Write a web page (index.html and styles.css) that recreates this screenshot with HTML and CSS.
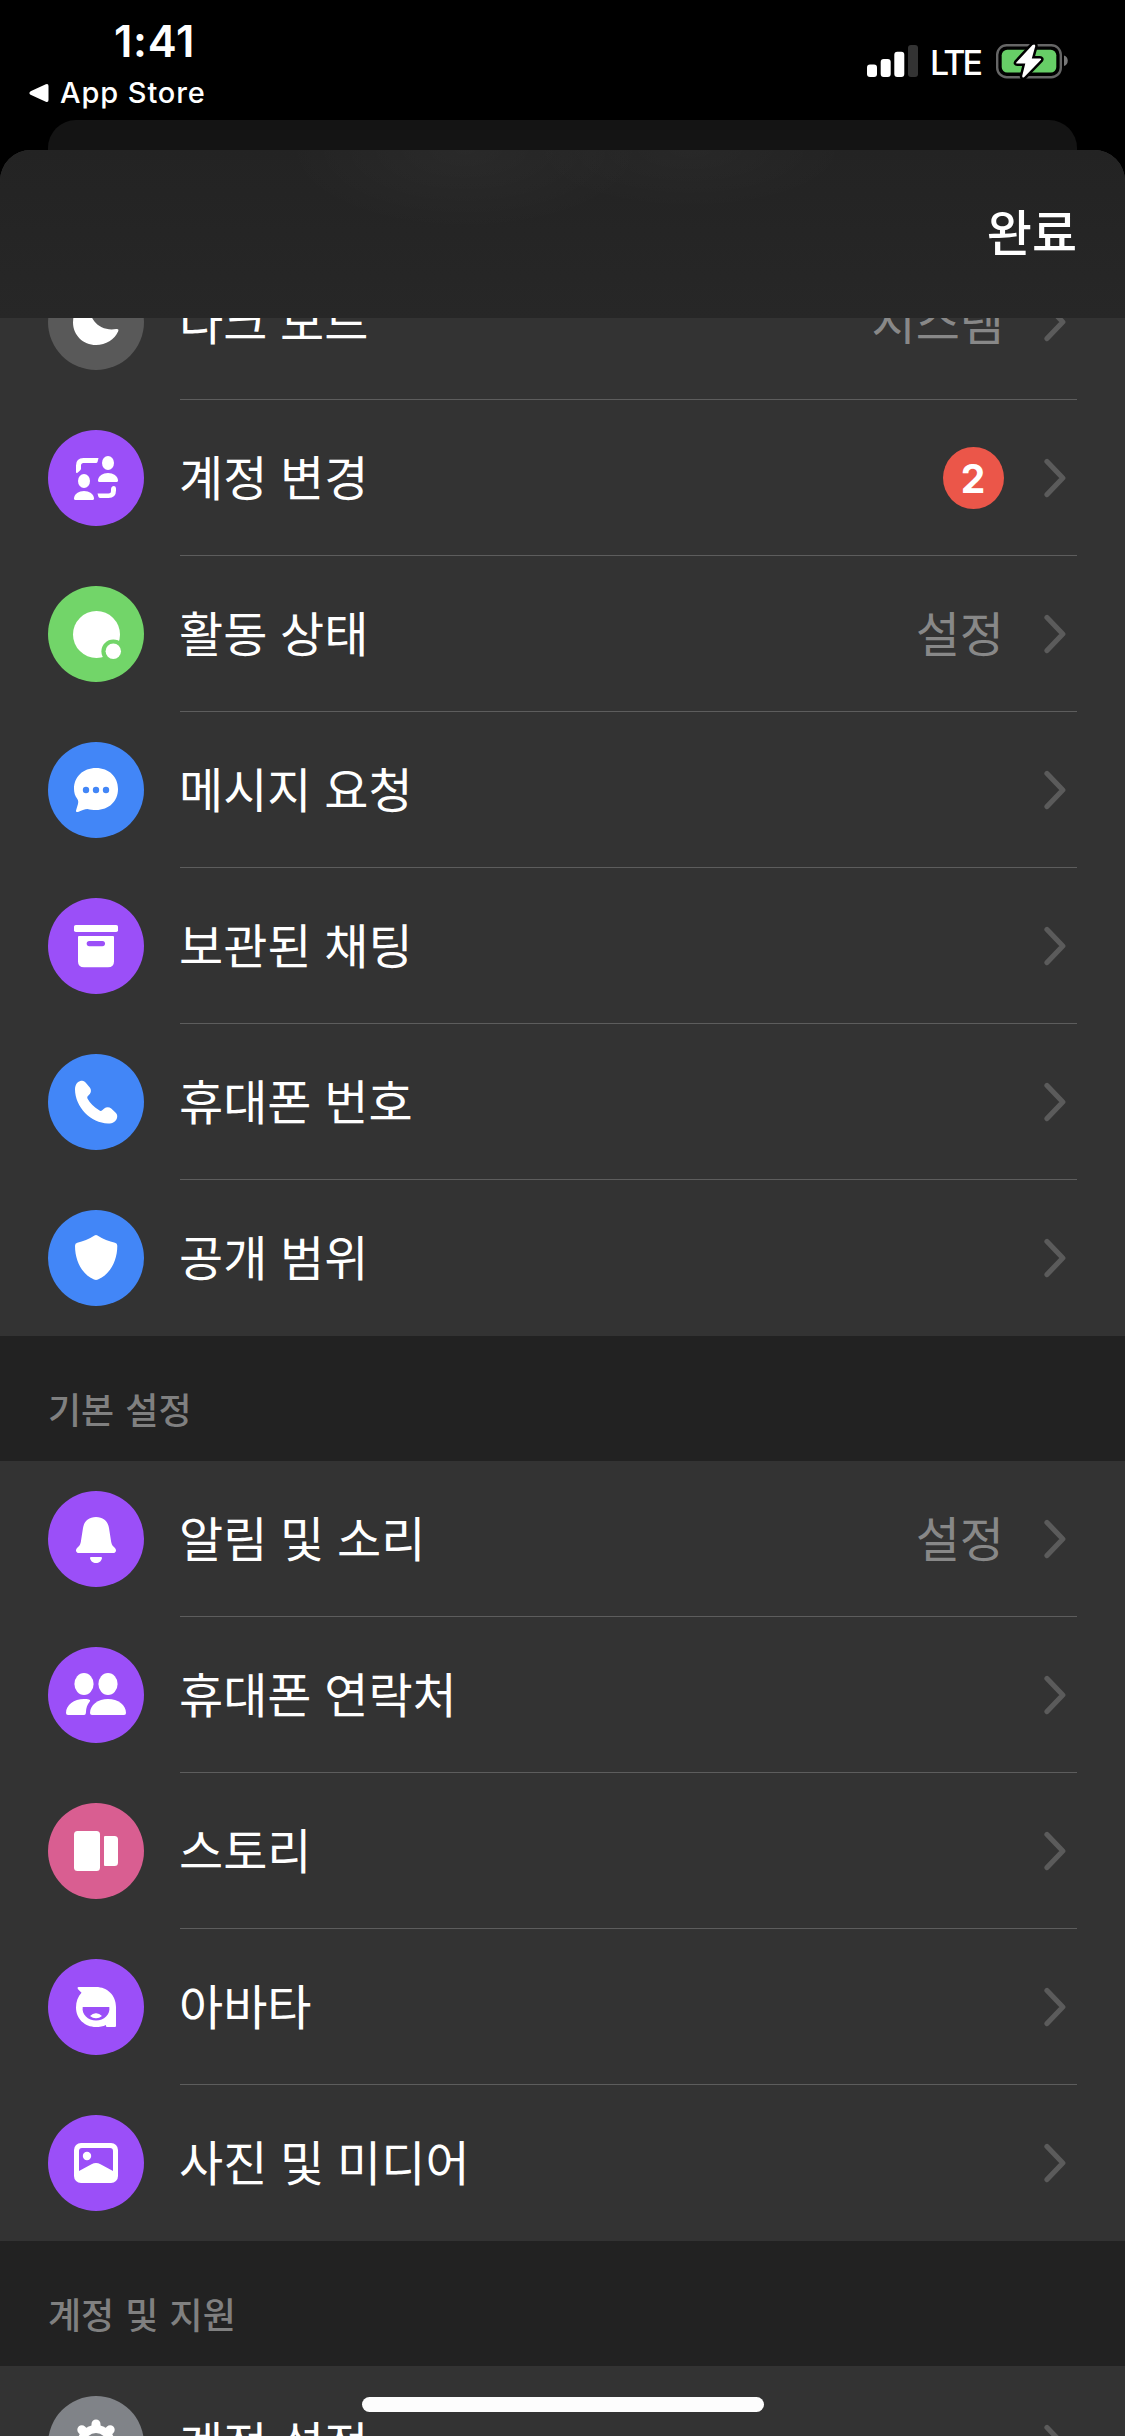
FILE: index.html
```html
<!DOCTYPE html>
<html lang="ko">
<head>
<meta charset="utf-8">
<meta name="viewport" content="width=device-width">
<title>설정</title>
<link rel="stylesheet" href="styles.css">
</head>
<body>
<svg width="0" height="0" class="defs" aria-hidden="true">
  <symbol id="chevron" viewBox="0 0 22 40"><path d="M3 3.5 18.8 20 3 36.5" fill="none" stroke="currentColor" stroke-width="5.2" stroke-linecap="round" stroke-linejoin="round"/></symbol>
</svg>
<div class="screen">
  <header class="status">
    <div class="status-left">
      <div class="clock">1:41</div>
      <div class="back-app">
        <svg width="20" height="20" viewBox="0 0 20 20"><path d="M1.6 8.2 16.8 1.2Q19.5.2 19.5 3V17Q19.5 19.8 16.8 18.8L1.6 11.8Q-.8 10 1.6 8.2z" fill="#fff"/></svg>
        <span>App Store</span>
      </div>
    </div>
    <div class="status-right">
      <svg class="signal" width="51" height="32" viewBox="0 0 51 32">
        <rect x="0" y="19.5" width="10" height="12.5" rx="3" fill="#fff"/>
        <rect x="13.7" y="14" width="10" height="18" rx="3" fill="#fff"/>
        <rect x="27.3" y="6.8" width="10" height="25.2" rx="3" fill="#fff"/>
        <rect x="41" y="0" width="10" height="32" rx="3" fill="#333"/>
      </svg>
      <span class="network">LTE</span>
      <svg class="battery" width="72" height="36" viewBox="0 0 72 36">
        <rect x="1.2" y="2.2" width="63.6" height="32" rx="9.5" fill="none" stroke="#666" stroke-width="2.4"/>
        <rect x="5.7" y="6.8" width="54.6" height="22.8" rx="5.5" fill="#67ce67"/>
        <path d="M68 12.5c5 1.500 5 9 0 10.500z" fill="#777"/>
        <path d="M36.500 2 20.500 19.200Q19.500 20.600 21.200 20.600H29.300L26.200 33Q26.300 35.500 28.300 34L44.800 17Q45.800 15.600 44 15.600H35.800L39.300 3Q39.200.5 36.500 2z" fill="#fff" stroke="#000" stroke-width="5" paint-order="stroke" stroke-linejoin="round"/>
      </svg>
    </div>
  </header>
  <div class="card-behind"></div>
  <main class="sheet">
    <nav class="nav"><span class="done">완료</span></nav>
    <div class="list">
      <section class="group group-first">
        <div class="row">
          <svg class="icon gray" viewBox="0 0 96 96"><path d="M43 27C32 28 25 38 25 48.500C25 61 35 71 48 71c10 0 18.500-5.500 22.200-13.800.8-1.700-.4-2.600-1.900-2.200C52 58 38 45 43 27z"/></svg>
          <div class="cell"><span class="label">다크 모드</span><span class="value">시스템</span><svg class="chev"><use href="#chevron"/></svg></div>
        </div>
        <div class="row">
          <svg class="icon purple" viewBox="0 0 96 96"><ellipse cx="60" cy="33" rx="6" ry="7"/><path d="M51.500 52Q50 52 50 50.500C50 46 55 43 60 43s10 3 10 7.500Q70 52 68.500 52z"/><ellipse cx="36" cy="51" rx="6" ry="7"/><path d="M27.500 70Q26 70 26 68.500C26 64 31 61 36 61s10 3 10 7.500Q46 70 44.500 70z"/><path d="M28 42V35.500Q28 28 35.500 28H50.500L49.500 32Q49.200 33 48 33H35.500Q33 33 33 35.500V38.500Q33 40 31.800 40.800L29.500 42.800Q28 43.500 28 42z"/><path d="M49.500 63.500H60.500Q63 63.500 63 61V59.500Q63 56 66 56Q68 56 68 58.500V60.500Q68 68 60.500 68H52.500Q51 68 50.500 67z"/></svg>
          <div class="cell"><span class="label">계정 변경</span><span class="badge">2</span><svg class="chev"><use href="#chevron"/></svg></div>
        </div>
        <div class="row">
          <svg class="icon green" viewBox="0 0 96 96"><circle cx="48.500" cy="48.500" r="23.500"/><circle cx="65.300" cy="65.300" r="11.900" fill="#72d569"/><circle cx="65.300" cy="65.300" r="7.700"/></svg>
          <div class="cell"><span class="label">활동 상태</span><span class="value">설정</span><svg class="chev"><use href="#chevron"/></svg></div>
        </div>
        <div class="row">
          <svg class="icon blue" viewBox="0 0 96 96"><path d="M48 26c13 0 22 8.800 22 21s-9 21-22 21c-3 0-6-.5-8.500-1.100-2.500.1-6.500 1.800-9.500 3-1.500.5-2.300-.2-1.900-1.600l1.800-6c.6-2.300.4-3.800-.7-5.600C27 54 26 50.500 26 47c0-12.200 9-21 22-21z"/><g fill="#4286f7"><circle cx="38" cy="48" r="3.200"/><circle cx="48" cy="48" r="3.200"/><circle cx="58" cy="48" r="3.200"/></g></svg>
          <div class="cell"><span class="label">메시지 요청</span><svg class="chev"><use href="#chevron"/></svg></div>
        </div>
        <div class="row">
          <svg class="icon purple" viewBox="0 0 96 96"><rect x="26" y="27" width="44" height="7" rx="1.800"/><path d="M31 38H65Q66 38 66 39V63.500Q66 69.300 60 69.300H36Q30 69.300 30 63.500V39Q30 38 31 38z"/><rect x="38.700" y="43" width="18.300" height="5.200" rx="2.600" fill="#9b4ff8"/></svg>
          <div class="cell"><span class="label">보관된 채팅</span><svg class="chev"><use href="#chevron"/></svg></div>
        </div>
        <div class="row">
          <svg class="icon blue" viewBox="0 0 96 96"><path d="M33 26.800c-3.500.8-6 4-6 8.500C27 53 43 69.400 60 69.400c5 0 8-2 9-5.500.7-2.300 0-4-1.800-5.700l-4-3.600c-2-1.800-5-1.800-7 0l-2 1.700c-1 .8-2 .8-3 0C46 53.500 42 49 39.600 44.800c-.5-1-.4-1.900.3-2.700l1.900-2.200c1.500-1.800 1.500-4.200.2-6.200L38.200 29.200C36.800 27.200 35.200 26.300 33 26.800z"/></svg>
          <div class="cell"><span class="label">휴대폰 번호</span><svg class="chev"><use href="#chevron"/></svg></div>
        </div>
        <div class="row">
          <svg class="icon blue" viewBox="0 0 96 96"><path d="M46.500 25.500q1.500-.9 3 0C55 29 61 31.500 67 32.800q2.300.6 2.300 3C69.300 52 61 65 50 69.500q-2 .8-4 0C35 65 27 52 27 35.800q0-2.400 2.300-3C35 31.500 41 29 46.500 25.500z"/></svg>
          <div class="cell"><span class="label">공개 범위</span><svg class="chev"><use href="#chevron"/></svg></div>
        </div>
      </section>
      <h2 class="heading">기본 설정</h2>
      <section class="group">
        <div class="row">
          <svg class="icon purple" viewBox="0 0 96 96"><path d="M48 26c7.500 0 12 4.500 13 11l2.200 14c.4 2 1 3.300 2 4.200l1.500 1.500c2.400 2.300 1.300 5.300-1.700 5.300H31c-3 0-4.100-3-1.700-5.300l1.500-1.500c1-.9 1.600-2.200 2-4.200L35 37c1-6.500 5.500-11 13-11z"/><path d="M43 66H53Q54 66 54 67C53.500 70 51 72 48 72s-5.500-2-6-5Q42 66 43 66z"/></svg>
          <div class="cell"><span class="label">알림 및 소리</span><span class="value">설정</span><svg class="chev"><use href="#chevron"/></svg></div>
        </div>
        <div class="row">
          <svg class="icon purple" viewBox="0 0 96 96"><ellipse cx="36" cy="37" rx="9.600" ry="11"/><ellipse cx="60" cy="37" rx="9.600" ry="11"/><path d="M44 68q-2 0-2-2C42 58 50 52 60 52s18 6 18 14q0 2-2 2z"/><path d="M20 68q-2 0-2-2C18 58 26 52 36 52c1.800 0 3.600.1 5 .5q1.800.6.8 2C39 58 38.200 61 38 64.500q0 3.500-2 3.500z"/></svg>
          <div class="cell"><span class="label">휴대폰 연락처</span><svg class="chev"><use href="#chevron"/></svg></div>
        </div>
        <div class="row">
          <svg class="icon pink" viewBox="0 0 96 96"><rect x="26" y="28" width="26" height="40" rx="3.500"/><path d="M57 33H66.500Q70 33 70 36.500V59.500Q70 63 66.500 63H57Q56 63 56 62V34Q56 33 57 33z"/></svg>
          <div class="cell"><span class="label">스토리</span><svg class="chev"><use href="#chevron"/></svg></div>
        </div>
        <div class="row">
          <svg class="icon purple" viewBox="0 0 96 96"><path d="M30.500 28H48C59.500 28 68 36.500 68 48V67Q68 68 67 68H59Q58 68 58 67V66C55 67.400 51.500 68 48 68C36.500 68 28 59.500 28 48.500C28 42.500 30 37.500 33.500 33.800L29.800 30Q29 28 30.500 28z"/><path d="M34.700 48H61.300C62.500 55.500 56 61.500 48 61.500S33.500 55.500 34.700 48z" fill="#9b4ff8"/><path d="M42 57Q45 54 48 54.200Q51 54 54 57Q51 59.300 48 59.200Q45 59.300 42 57z"/></svg>
          <div class="cell"><span class="label">아바타</span><svg class="chev"><use href="#chevron"/></svg></div>
        </div>
        <div class="row">
          <svg class="icon purple" viewBox="0 0 96 96"><rect x="26" y="28" width="44" height="40" rx="7"/><path d="M34 33H62Q65 33 65 36V56L52.500 49.200Q48 46.800 43.500 49.200L31 56V36Q31 33 34 33z" fill="#9b4ff8"/><circle cx="39" cy="41" r="4.200"/></svg>
          <div class="cell"><span class="label">사진 및 미디어</span><svg class="chev"><use href="#chevron"/></svg></div>
        </div>
      </section>
      <h2 class="heading">계정 및 지원</h2>
      <section class="group">
        <div class="row">
          <svg class="icon silver" viewBox="0 0 96 96"><circle cx="48" cy="48" r="19"/><path d="M48 28V68M28 48H68M33.800 33.800 62.200 62.200M62.200 33.800 33.800 62.200" stroke="#fff" stroke-width="9" stroke-linecap="round"/><circle cx="48" cy="48" r="11" fill="#808388"/></svg>
          <div class="cell"><span class="label">계정 설정</span><svg class="chev"><use href="#chevron"/></svg></div>
        </div>
      </section>
    </div>
  </main>
  <div class="home-bar"></div>
</div>
</body>
</html>
```
FILE: styles.css
```css
* { box-sizing: border-box; }
body {
  margin: 0;
  background: #000;
  color: #fff;
  font-family: Inter, "Noto Sans CJK KR", sans-serif;
}
.defs { display: block; position: absolute; }
.screen {
  position: relative;
  width: 1125px;
  height: 2436px;
  overflow: hidden;
  display: flex;
  flex-direction: column;
}

/* Status bar */
.status {
  height: 120px;
  flex: none;
  display: flex;
  justify-content: space-between;
}
.status-left { padding: 15px 0 0 29px; }
.clock {
  width: 250px;
  padding-left: 85px;
  font-size: 43.5px;
  line-height: 52px;
  font-weight: 600;
  letter-spacing: 0.7px;
}
.back-app {
  display: flex;
  align-items: center;
  gap: 11px;
  margin-top: 8px;
  font-size: 29px;
  line-height: 36px;
  font-weight: 500;
  letter-spacing: 0.9px;
}
.status-right {
  display: flex;
  align-items: flex-start;
  padding: 43px 57px 0 0;
}
.signal { margin-top: 2px; }
.network {
  width: 78px;
  padding-left: 12px;
  font-size: 34px;
  line-height: 40px;
  font-weight: 500;
  letter-spacing: -2.8px;
}

/* Sheets */
.card-behind {
  height: 60px;
  margin: 0 48px -30px;
  flex: none;
  border-radius: 28px 28px 0 0;
  background: #141414;
}
.sheet {
  position: relative;
  flex: 1;
  min-height: 0;
  border-radius: 31px 31px 0 0;
  overflow: hidden;
  background: #333;
}
.nav {
  position: relative;
  z-index: 1;
  height: 168px;
  display: flex;
  align-items: center;
  justify-content: flex-end;
  padding: 0 48px 0 0;
  background:
    radial-gradient(ellipse 180px 80px at 465px 0, rgba(255, 255, 255, 0.03), transparent),
    radial-gradient(ellipse 160px 60px at 690px 0, rgba(255, 255, 255, 0.025), transparent),
    linear-gradient(#232323, #272727);
}
.done {
  font-size: 49px;
  line-height: 60px;
  font-weight: 500;
}

/* List */
.list { margin-top: -74px; }
.row {
  height: 156px;
  display: flex;
  align-items: center;
  gap: 36px;
  padding: 0 48px;
}
.cell {
  flex: 1;
  height: 100%;
  display: flex;
  align-items: center;
  border-bottom: 1px solid #5d5d5d;
}
.row:last-child .cell { border-bottom-color: transparent; }
.label, .value {
  padding-top: 2px;
  font-size: 48px;
  line-height: 70px;
  word-spacing: -0.7px;
}
.label { flex: 1; margin-left: -1px; }
.value { color: #888; }
.chev {
  width: 22px;
  height: 40px;
  margin: 0 11px 0 40px;
  color: #5b5b5b;
}
.badge {
  width: 61px;
  height: 62px;
  padding-right: 1px;
  border-radius: 50%;
  background: #eb5649;
  font-size: 39px;
  line-height: 63px;
  font-weight: 700;
  text-align: center;
}
.heading {
  height: 125px;
  margin: 0;
  padding: 49px 48px 0;
  background: #222;
  color: #808080;
  font-size: 36px;
  line-height: 52px;
  font-weight: 500;
  word-spacing: 1.5px;
}

/* Icons */
.icon {
  flex: none;
  width: 96px;
  height: 96px;
  border-radius: 50%;
  fill: #fff;
}
.gray { background: #595959; }
.purple { background: #9b4ff8; }
.green { background: #72d569; }
.blue { background: #4286f7; }
.pink { background: #d95e91; }
.silver { background: #808388; }

.home-bar {
  position: absolute;
  left: 362px;
  top: 2397px;
  width: 402px;
  height: 15px;
  border-radius: 8px;
  background: #fdfdfd;
}
```
